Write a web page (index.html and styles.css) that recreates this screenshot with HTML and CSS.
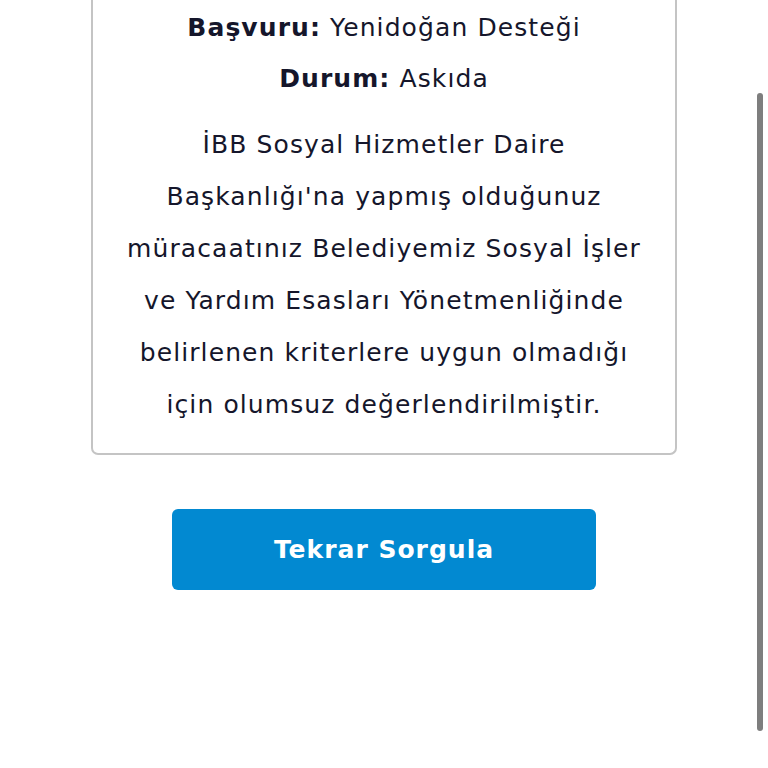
FILE: index.html
```html
<!DOCTYPE html>
<html lang="tr">
<head>
<meta charset="utf-8">
<link rel="stylesheet" href="styles.css">
</head>
<body>
<main class="page">
  <section class="card">
    <p class="meta"><b>Başvuru:</b> Yenidoğan Desteği</p>
    <p class="meta"><b>Durum:</b> Askıda</p>
    <p class="desc">İBB Sosyal Hizmetler Daire<br>Başkanlığı'na yapmış olduğunuz<br>müracaatınız Belediyemiz Sosyal İşler<br>ve Yardım Esasları Yönetmenliğinde<br>belirlenen kriterlere uygun olmadığı<br>için olumsuz değerlendirilmiştir.</p>
  </section>
  <button class="btn">Tekrar Sorgula</button>
</main>
<div class="scrollbar"></div>
</body>
</html>
```
FILE: styles.css
```css
html, body {
  margin: 0;
  padding: 0;
  background: #ffffff;
}
body {
  font-family: "DejaVu Sans", "Open Sans", sans-serif;
  color: #15162b;
  overflow: hidden;
  height: 768px;
}
.page {
  display: flex;
  flex-direction: column;
  align-items: center;
}
.card {
  box-sizing: border-box;
  width: 586px;
  margin-top: -38px;
  padding: 40px 4px 22px;
  border: 2px solid #c4c4c4;
  border-top: none;
  border-radius: 0 0 7px 7px;
  text-align: center;
}
.meta {
  margin: 0;
  font-size: 25px;
  line-height: 51px;
  letter-spacing: 1.1px;
}
.meta b {
  font-weight: 700;
}
.desc {
  margin: 15px 0 0;
  font-size: 25px;
  line-height: 52px;
  letter-spacing: 1.1px;
}
.btn {
  margin-top: 54px;
  width: 424px;
  height: 81px;
  border: none;
  border-radius: 6px;
  background: #0289d1;
  color: #ffffff;
  font-family: "DejaVu Sans", "Open Sans", sans-serif;
  font-weight: 700;
  font-size: 25px;
  letter-spacing: 1px;
}
.scrollbar {
  position: fixed;
  left: 757px;
  top: 93px;
  width: 6px;
  height: 638px;
  border-radius: 3px;
  background: #7e7e7e;
}
```
